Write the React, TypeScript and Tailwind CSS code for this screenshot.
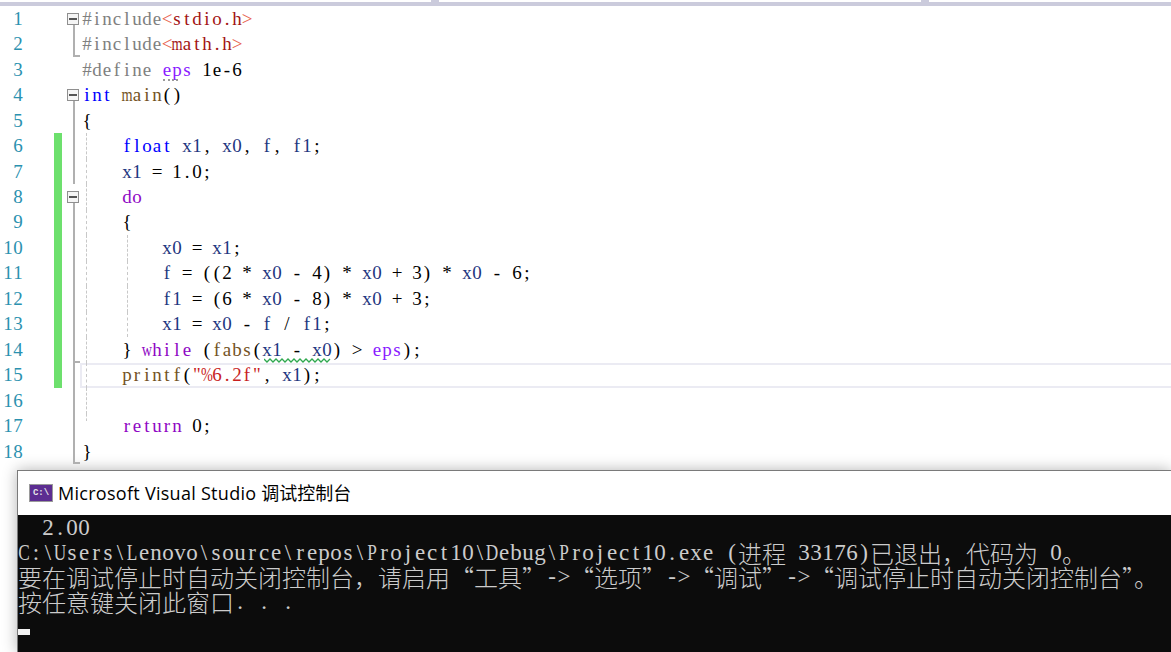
import React from 'react';

// SimSun isn't installed: Liberation Serif set in fixed cells gives the same half-width look
const serif = 'font-["Liberation_Serif",serif]';

const Code = ({ text, className }: { text: string; className?: string }) => (
  <>
    {Array.from(text).map((ch, i) => (
      <span key={i} className={`inline-flex justify-center w-[10px] ${'mw%'.includes(ch) ? 'scale-x-75' : ''} ${className ?? ''}`}>{ch}</span>
    ))}
  </>
);

const Con = ({ text }: { text: string }) => (
  <>
    {Array.from(text).map((ch, i) => (
      <span key={i} className={`inline-flex justify-center w-[12px] ${'CULDP'.includes(ch) ? 'scale-x-75' : ''}`}>{ch}</span>
    ))}
  </>
);

// token colours, VS default light theme
const c = {
  pre: 'text-[#808080]',
  inc: 'text-[#a31515]',
  ang: 'text-[#e8604c]',
  mac: 'text-[#8a1bff]',
  key: 'text-[#0000ff]',
  ctl: 'text-[#8f08c4]',
  fn: 'text-[#74531f]',
  v: 'text-[#1f377f]',
  str: 'text-[#c81e1e]',
  p: 'text-black',
};

type Tok = [string, string];

const code: Tok[][] = [
  [['#include', c.pre], ['<', c.ang], ['stdio.h', c.inc], ['>', c.ang]],
  [['#include', c.pre], ['<', c.ang], ['math.h', c.inc], ['>', c.ang]],
  [['#define ', c.pre], ['eps', c.mac], [' 1e-6', c.p]],
  [['int', c.key], [' ', c.p], ['main', c.fn], ['()', c.p]],
  [['{', c.p]],
  [['    ', c.p], ['float', c.key], [' ', c.p], ['x1', c.v], [', ', c.p], ['x0', c.v], [', ', c.p], ['f', c.v], [', ', c.p], ['f1', c.v], [';', c.p]],
  [['    ', c.p], ['x1', c.v], [' = 1.0;', c.p]],
  [['    ', c.p], ['do', c.ctl]],
  [['    {', c.p]],
  [['        ', c.p], ['x0', c.v], [' = ', c.p], ['x1', c.v], [';', c.p]],
  [['        ', c.p], ['f', c.v], [' = ((2 * ', c.p], ['x0', c.v], [' - 4) * ', c.p], ['x0', c.v], [' + 3) * ', c.p], ['x0', c.v], [' - 6;', c.p]],
  [['        ', c.p], ['f1', c.v], [' = (6 * ', c.p], ['x0', c.v], [' - 8) * ', c.p], ['x0', c.v], [' + 3;', c.p]],
  [['        ', c.p], ['x1', c.v], [' = ', c.p], ['x0', c.v], [' - ', c.p], ['f', c.v], [' / ', c.p], ['f1', c.v], [';', c.p]],
  [['    } ', c.p], ['while', c.ctl], [' (', c.p], ['fabs', c.fn], ['(', c.p], ['x1', c.v], [' - ', c.p], ['x0', c.v], [') > ', c.p], ['eps', c.mac], [');', c.p]],
  [['    ', c.p], ['printf', c.fn], ['(', c.p], ['"%6.2f"', c.str], [', ', c.p], ['x1', c.v], [');', c.p]],
  [],
  [['    ', c.p], ['return', c.ctl], [' 0;', c.p]],
  [['}', c.p]],
];

const FoldBox = () => (
  <div className="absolute left-[5px] top-[7px] w-[12px] h-[12px] border border-[#8f8f8f] bg-[#f5f5f5] flex items-center justify-center z-10">
    <div className="w-[8px] h-[2px] bg-[#555555]" />
  </div>
);

const FoldColumn = ({ line }: { line: number }) => {
  const hasBox = line === 1 || line === 4 || line === 8;
  const hasLine = line === 2 || (line >= 4 && line <= 18);
  const cap = line === 2 || line === 14 || line === 18;
  return (
    <div className="relative w-[20px] h-full shrink-0">
      {hasLine && (
        <div className={`absolute left-[11px] w-[2px] bg-[#b0b0b0] ${line === 4 || line === 8 ? 'top-[19px] bottom-0' : 'top-0 bottom-0'}`} />
      )}
      {line === 1 && <div className="absolute left-[11px] top-[19px] bottom-0 w-[2px] bg-[#b0b0b0]" />}
      {cap && <div className="absolute left-[11px] bottom-0 w-[7px] h-[2px] bg-[#b0b0b0]" />}
      {hasBox && <FoldBox />}
    </div>
  );
};

const Row = ({ toks, line }: { toks: Tok[]; line: number }) => {
  const green = line >= 6 && line <= 15;
  return (
    <div className="flex h-[25.47px] items-center">
      <div className="w-[23px] text-right text-[#2b91af] shrink-0 whitespace-nowrap"><Code text={String(line)} /></div>
      <div className="w-[31px] shrink-0" />
      <div className={`w-[8px] h-full shrink-0 ${green ? 'bg-[#6de06d]' : ''}`} />
      <FoldColumn line={line} />
      <div className="relative flex-1 h-full flex items-center whitespace-pre">
        {line === 15 && <div className="absolute left-[-2px] right-0 top-0 bottom-0 border-2 border-r-0 border-[#ebebf3]" />}
        {line >= 6 && line <= 16 && (
          <div className="absolute left-[4px] top-0 bottom-0 border-l border-dashed border-[#c8c8c8]" />
        )}
        {line === 17 && <div className="absolute left-[4px] top-0 h-[7px] border-l border-dashed border-[#c8c8c8]" />}
        {line >= 10 && line <= 13 && (
          <div className="absolute left-[45px] top-0 bottom-0 border-l border-dashed border-[#c8c8c8]" />
        )}
        <span className="relative">
          {toks.map((t, i) => (
            <Code key={i} text={t[0]} className={t[1]} />
          ))}
        </span>
        {line === 3 && (
          <div className="absolute left-[81px] bottom-[1px] w-[15px] border-b-2 border-dotted border-[#9a9a9a]" />
        )}
        {line === 14 && (
          <svg className="absolute left-[182px] bottom-[0px]" width="68" height="5" viewBox="0 0 68 5" fill="none">
            <path
              d="M0 1L3 4L6 1L9 4L12 1L15 4L18 1L21 4L24 1L27 4L30 1L33 4L36 1L39 4L42 1L45 4L48 1L51 4L54 1L57 4L60 1L63 4L66 1"
              stroke="#2fa84f"
              strokeWidth="1.3"
            />
          </svg>
        )}
      </div>
    </div>
  );
};

// Chinese is 24px a char in the console, twice the Latin cell
const Z = ({ children }: { children: React.ReactNode }) => (
  <span lang="zh-CN" className='font-["Noto_Sans_CJK_SC",sans-serif] text-[24px] font-light leading-[24px]'>{children}</span>
);

const ConsoleRow = ({ children }: { children?: React.ReactNode }) => (
  <div className="flex items-center h-[24.5px] leading-[24px] whitespace-pre">{children}</div>
);

const App = () => {
  return (
    <div className="relative w-[1171px] h-[652px] overflow-hidden bg-white">
      <div className="h-[2px] flex">
        <div className="ml-[431px] w-[8px] bg-[#cbcbdc]" />
        <div className="ml-[482px] w-[8px] bg-[#cbcbdc]" />
      </div>
      <div className="h-[4px] bg-[#cbcbdc]" />

      <div className={`${serif} text-[19px] leading-[24px]`}>
        {code.map((toks, i) => (
          <Row key={i} toks={toks} line={i + 1} />
        ))}
      </div>

      <div className="mt-[5.5px] ml-[17px] w-[1154px] border-l border-t border-[#7a7a7a] shadow-[0_0_14px_rgba(0,0,0,0.3)]">
        <div className="h-[44px] bg-white flex items-center pl-[11px] gap-[5px]">
          <div className="w-[24px] h-[18px] border border-[#9a9a9a] bg-[#5c2d91] pt-[2px] flex items-center justify-center">
            <span className='font-["Liberation_Mono",monospace] text-[9px] font-bold leading-none text-[#e6e6e6]'>C:\</span>
          </div>
          <span className='font-["Open_Sans","Noto_Sans",sans-serif] text-[18px] tracking-[0.28px] text-black whitespace-pre'>
            Microsoft Visual Studio <span lang="zh-CN" className='font-["Noto_Sans_CJK_SC",sans-serif] tracking-normal'>调试控制台</span>
          </span>
        </div>
        <div className={`${serif} h-[137px] bg-[#0c0c0c] text-[#cccccc] text-[23px] pt-[1px]`}>
          <ConsoleRow><Con text="  2.00" /></ConsoleRow>
          <ConsoleRow>
            <Con text="C:\Users\Lenovo\source\repos\Project10\Debug\Project10.exe (" />
            <Z>进程</Z>
            <Con text=" 33176)" />
            <Z>已退出，代码为</Z>
            <Con text=" 0" />
            <Z>。</Z>
          </ConsoleRow>
          <ConsoleRow>
            <Z>要在调试停止时自动关闭控制台，请启用“工具”</Z>
            <Con text="->" />
            <Z>“选项”</Z>
            <Con text="->" />
            <Z>“调试”</Z>
            <Con text="->" />
            <Z>“调试停止时自动关闭控制台”。</Z>
          </ConsoleRow>
          <ConsoleRow>
            <Z>按任意键关闭此窗口</Z>
            <Con text=". . ." />
          </ConsoleRow>
          <div className="mt-[15px] w-[12px] h-[6px] bg-[#f2f2f2]" />
        </div>
      </div>
    </div>
  );
};

export default App;
